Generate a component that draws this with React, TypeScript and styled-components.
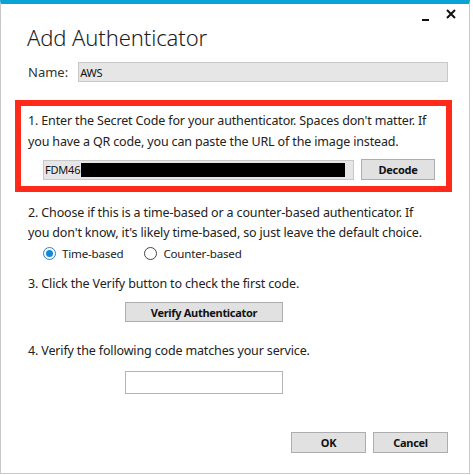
import * as React from "react";
import styled, { createGlobalStyle } from "styled-components";

const GlobalStyle = createGlobalStyle`
    html, body {
        margin: 0;
        padding: 0;
        background: #fff;
    }
    body {
        font-family: "Noto Sans", "Open Sans", sans-serif;
        color: #1a1a1a;
    }
`;

const Window = styled.div`
    position: relative;
    box-sizing: border-box;
    width: 470px;
    height: 474px;
    border-top: 4px solid #0aa3d6;
    border-left: 1px solid #c9c9c9;
    border-right: 1px solid #c9c9c9;
    border-bottom: 1px solid #c9c9c9;
    display: flex;
    flex-direction: column;
    padding: 0 0 0 14px;
`;

const Controls = styled.div`
    position: absolute;
    top: 3px;
    right: 12px;
    display: flex;
    gap: 14px;
    align-items: center;
`;

const Title = styled.h1`
    margin: 18px 0 0 12px;
    font-size: 22px;
    font-weight: 300;
    line-height: 30px;
    letter-spacing: -0.1px;
    color: #1e1e1e;
`;

const NameRow = styled.div`
    display: flex;
    align-items: center;
    margin: 10px 0 0 13px;
    gap: 10px;
`;

const Label = styled.span`
    font-size: 13px;
    color: #333;
`;

const Field = styled.div<{ $width: number; $height?: number; $gray?: boolean }>`
    box-sizing: border-box;
    width: ${({ $width }) => $width}px;
    height: ${({ $height }) => $height || 20}px;
    border: 1px solid ${({ $gray }) => ($gray ? "#c8c8c8" : "#b4b4b4")};
    background: ${({ $gray }) => ($gray ? "#e6e6e6" : "#fff")};
    font-size: 11px;
    letter-spacing: -0.2px;
    color: #111;
    padding-left: 1px;
    display: flex;
    align-items: center;
    overflow: hidden;
`;

const RedBox = styled.div`
    box-sizing: border-box;
    width: 437px;
    margin-top: 18px;
    border: 6px solid #ff2a1a;
    padding: 4px 0 6px 7px;
`;

const Step = styled.p<{ $top?: number; $lh?: number }>`
    margin: ${({ $top }) => $top || 0}px 0 0 0;
    font-size: 12.5px;
    letter-spacing: -0.15px;
    line-height: ${({ $lh }) => $lh || 21}px;
    color: #222;
    white-space: nowrap;
`;

const Section = styled.div<{ $top: number }>`
    margin: ${({ $top }) => $top}px 0 0 13px;
`;

const CodeRow = styled.div`
    display: flex;
    align-items: center;
    gap: 7px;
    margin: 7px 0 0 15px;
`;

const Redacted = styled.span`
    display: inline-block;
    flex: none;
    width: 264px;
    height: 14px;
    margin-left: 1px;
    background: #000;
`;

const Button = styled.button<{ $width: number; $height?: number }>`
    box-sizing: border-box;
    width: ${({ $width }) => $width}px;
    height: ${({ $height }) => $height || 21}px;
    background: #e1e1e1;
    border: 1px solid #adadad;
    font-family: "Noto Sans", "Open Sans", sans-serif;
    font-weight: 700;
    font-size: 11px;
    letter-spacing: -0.3px;
    color: #111;
    padding: 0;
`;

const RadioRow = styled.div`
    display: flex;
    align-items: center;
    height: 14px;
    margin: 3px 0 0 15px;
    gap: 21px;
`;

const RadioItem = styled.label`
    display: flex;
    align-items: center;
    gap: 6px;
    font-size: 11.6px;
    letter-spacing: -0.2px;
    color: #222;
`;

const RadioDot = styled.span<{ $checked?: boolean }>`
    box-sizing: border-box;
    width: 13px;
    height: 13px;
    border-radius: 50%;
    border: 1px solid ${({ $checked }) => ($checked ? "#3a7bbf" : "#444")};
    display: flex;
    align-items: center;
    justify-content: center;

    &::after {
        content: "";
        width: 7px;
        height: 7px;
        border-radius: 50%;
        background: ${({ $checked }) => ($checked ? "#0f8ad8" : "transparent")};
    }
`;

const Centered = styled.div<{ $top: number }>`
    display: flex;
    margin: ${({ $top }) => $top}px 0 0 110px;
`;

const Footer = styled.div`
    display: flex;
    justify-content: flex-end;
    gap: 7px;
    margin-top: auto;
    margin-right: 21px;
    margin-bottom: 20px;
`;

const App = () => {
    return (
        <>
            <GlobalStyle />
            <Window>
                <Controls>
                    <svg width="10" height="14" viewBox="0 0 10 14">
                        <rect x="1" y="12" width="7" height="2" fill="#111" />
                    </svg>
                    <svg width="12" height="14" viewBox="0 0 12 14">
                        <path d="M2 3 L10 11 M10 3 L2 11" stroke="#111" strokeWidth="2" />
                    </svg>
                </Controls>
                <Title>Add Authenticator</Title>
                <NameRow>
                    <Label>Name:</Label>
                    <Field $width={370} $height={20} $gray>
                        AWS
                    </Field>
                </NameRow>
                <RedBox>
                    <Step>
                        1. Enter the Secret Code for your authenticator. Spaces don't matter. If
                        <br />
                        you have a QR code, you can paste the URL of the image instead.
                    </Step>
                    <CodeRow>
                        <Field $width={311} $height={20} $gray>
                            FDM46
                            <Redacted />
                        </Field>
                        <Button $width={74}>Decode</Button>
                    </CodeRow>
                </RedBox>
                <Section $top={11}>
                    <Step $lh={20}>
                        2. Choose if this is a time-based or a counter-based authenticator. If
                        <br />
                        you don't know, it's likely time-based, so just leave the default choice.
                    </Step>
                    <RadioRow>
                        <RadioItem>
                            <RadioDot $checked />
                            Time-based
                        </RadioItem>
                        <RadioItem>
                            <RadioDot />
                            Counter-based
                        </RadioItem>
                    </RadioRow>
                    <Step $top={14} $lh={20}>
                        3. Click the Verify button to check the first code.
                    </Step>
                </Section>
                <Centered $top={8}>
                    <Button $width={158} $height={20}>
                        Verify Authenticator
                    </Button>
                </Centered>
                <Section $top={19}>
                    <Step $lh={20}>4. Verify the following code matches your service.</Step>
                </Section>
                <Centered $top={10}>
                    <Field $width={158} $height={23} />
                </Centered>
                <Footer>
                    <Button $width={75}>OK</Button>
                    <Button $width={75}>Cancel</Button>
                </Footer>
            </Window>
        </>
    );
};

export default App;
